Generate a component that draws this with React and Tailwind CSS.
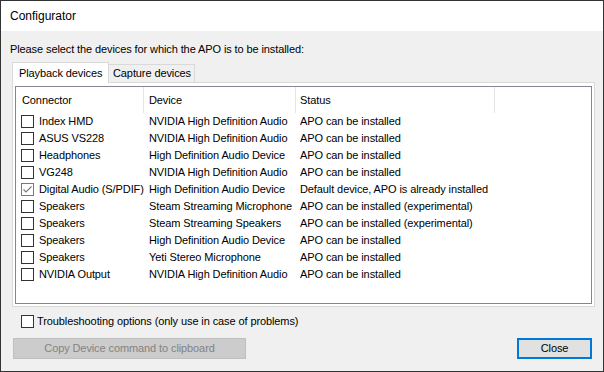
import React from 'react';

const rows = [
  ['Index HMD', 'NVIDIA High Definition Audio', 'APO can be installed', false],
  ['ASUS VS228', 'NVIDIA High Definition Audio', 'APO can be installed', false],
  ['Headphones', 'High Definition Audio Device', 'APO can be installed', false],
  ['VG248', 'NVIDIA High Definition Audio', 'APO can be installed', false],
  ['Digital Audio (S/PDIF)', 'High Definition Audio Device', 'Default device, APO is already installed', true],
  ['Speakers', 'Steam Streaming Microphone', 'APO can be installed (experimental)', false],
  ['Speakers', 'Steam Streaming Speakers', 'APO can be installed (experimental)', false],
  ['Speakers', 'High Definition Audio Device', 'APO can be installed', false],
  ['Speakers', 'Yeti Stereo Microphone', 'APO can be installed', false],
  ['NVIDIA Output', 'NVIDIA High Definition Audio', 'APO can be installed', false],
];

function CheckBox({ checked }) {
  return (
    <div className={`w-[13px] h-[13px] shrink-0 bg-white border flex items-center justify-center ${checked ? 'border-[#7a7a7a]' : 'border-[#333333]'}`}>
      {checked && (
        <svg width="11" height="11" viewBox="0 0 11 11">
          <path d="M1.5 5.5 L4 8 L9.5 2.5" fill="none" stroke="#7a7a7a" strokeWidth="1.1" />
        </svg>
      )}
    </div>
  );
}

export default function App() {
  return (
    <div className="w-[604px] h-[372px] border border-[#333333] flex flex-col text-[11px] tracking-[-0.1px] text-black font-['Liberation_Sans',Arial,sans-serif]">
      {/* Title bar */}
      <div className="h-[30px] bg-white flex items-center pl-[9px] text-[12px] tracking-normal shrink-0">Configurator</div>

      <div className="flex-1 bg-[#f0f0f0] flex flex-col pt-[11px]">
        <p className="leading-[14px] pl-[9px]">Please select the devices for which the APO is to be installed:</p>

        {/* Tabs */}
        <div className="mt-[6px] ml-[11px] h-[20px] flex items-end">
          <div className="relative z-10 w-[97px] h-[21px] -mb-px bg-white border-l border-t border-r border-[#d9d9d9] flex items-center pl-[6px]">
            Playback devices
          </div>
          <div className="w-[86px] h-[18px] bg-[#f0f0f0] border-t border-r border-[#d9d9d9] flex items-center pl-[4px]">
            Capture devices
          </div>
        </div>

        {/* Tab panel */}
        <div className="ml-[11px] w-[583px] h-[225px] bg-white border border-[#d9d9d9] px-[2px] pt-[3px] pb-[2px]">
          <div className="h-full border border-[#828790] bg-white overflow-hidden">
            <div className="grid grid-cols-[128px_152px_199px_1fr] h-[26px]">
              <div className="border-r border-[#e5e5e5] flex items-center pl-[6px]">Connector</div>
              <div className="border-r border-[#e5e5e5] flex items-center pl-[5px]">Device</div>
              <div className="border-r border-[#e5e5e5] flex items-center pl-[4px]">Status</div>
              <div />
            </div>
            {rows.map(([conn, dev, status, checked], i) => (
              <div key={i} className="grid grid-cols-[128px_152px_199px_1fr] h-[17px] items-center whitespace-nowrap">
                <div className="flex items-center pl-[5px] gap-[5px]">
                  <CheckBox checked={checked} />
                  <span>{conn}</span>
                </div>
                <div className="pl-[5px]">{dev}</div>
                <div className="pl-[4px]">{status}</div>
                <div />
              </div>
            ))}
          </div>
        </div>

        {/* Troubleshooting */}
        <div className="mt-[8px] h-[13px] pl-[20px] flex items-center gap-[3px]">
          <CheckBox checked={false} />
          <span>Troubleshooting options (only use in case of problems)</span>
        </div>

        {/* Buttons */}
        <div className="mt-[10px] flex justify-between pl-[12px] pr-[11px]">
          <button className="w-[233px] h-[21px] bg-[#cccccc] border border-[#bfbfbf] text-[#838383] flex items-center justify-center">
            Copy Device command to clipboard
          </button>
          <button className="w-[75px] h-[21px] bg-[#e1e1e1] border-2 border-[#0078d7] flex items-center justify-center">
            Close
          </button>
        </div>
      </div>
    </div>
  );
}
